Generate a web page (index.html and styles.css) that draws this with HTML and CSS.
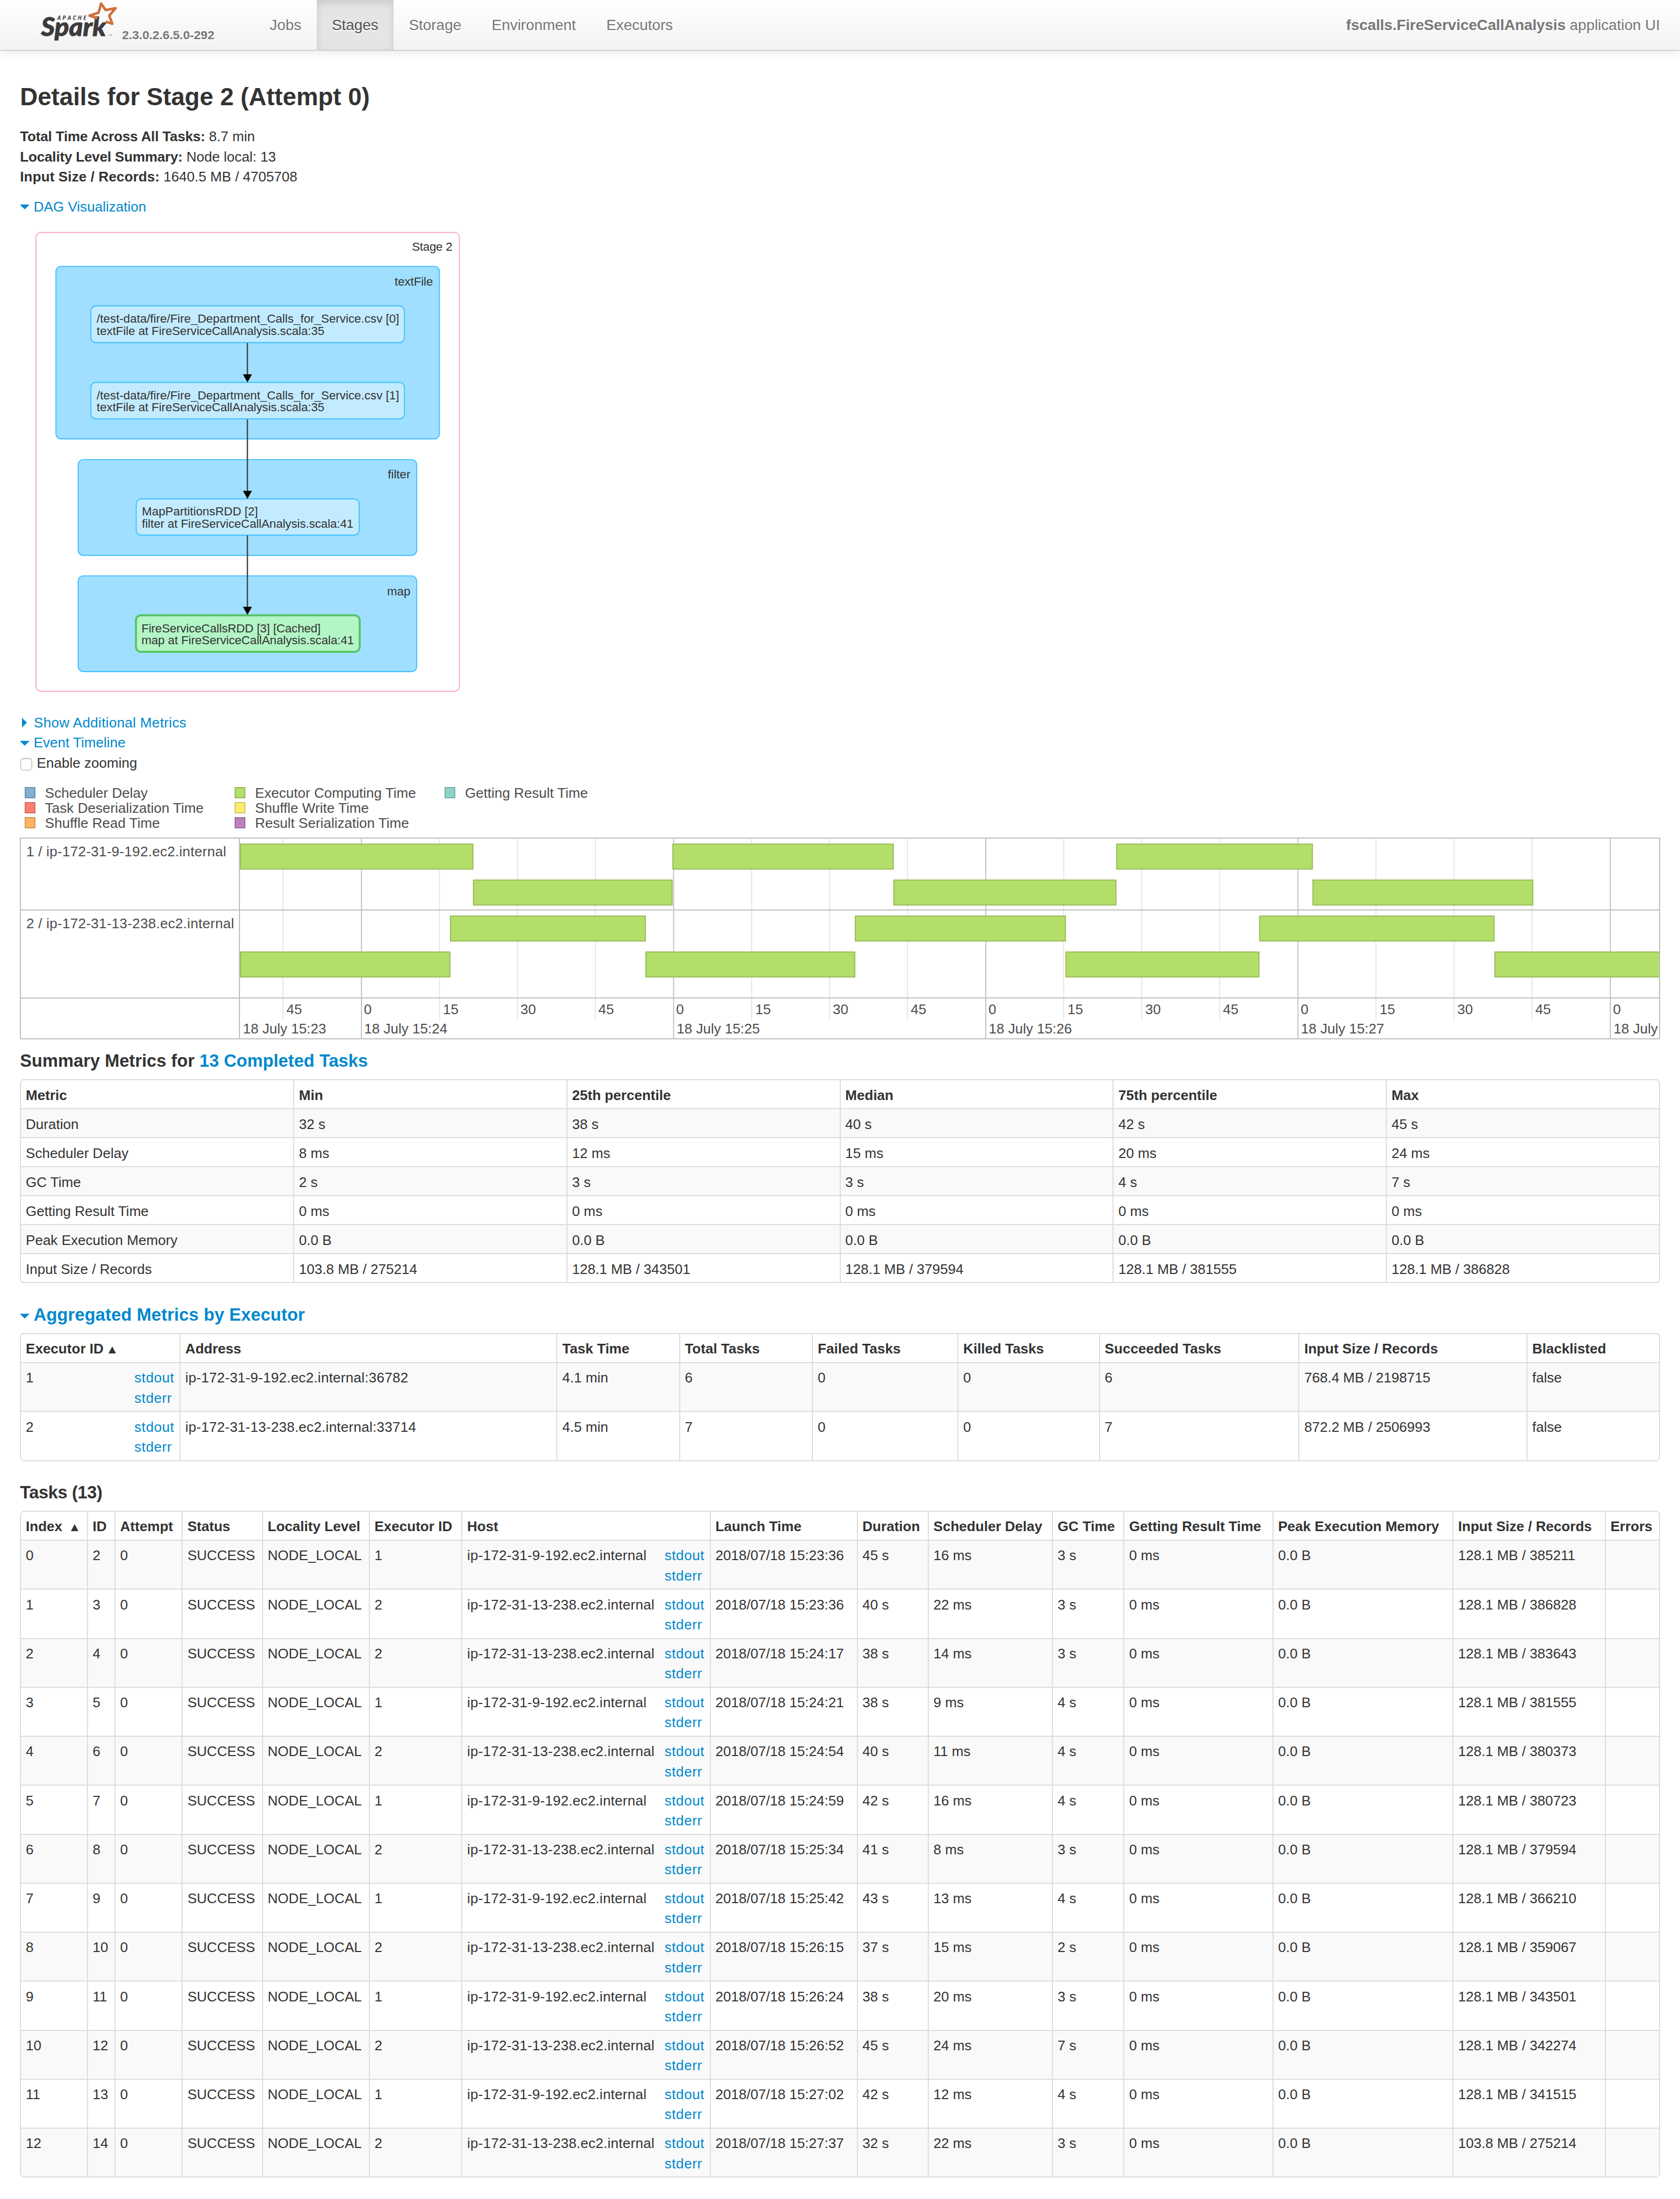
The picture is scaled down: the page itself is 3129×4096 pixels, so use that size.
FILE: index.html
```html
<!DOCTYPE html>
<html lang="en">
<head>
<meta charset="utf-8">
<title>fscalls.FireServiceCallAnalysis - Details for Stage 2 (Attempt 0)</title>
<link rel="stylesheet" href="styles.css">
</head>
<body>
<header class="navbar">
  <a class="brand">
    <svg class="logo" viewBox="60 0 400 110" role="img" aria-label="Apache Spark">
      <text class="logo-word" x="82" y="71.5" textLength="130" lengthAdjust="spacingAndGlyphs">Spark</text>
      <text class="logo-apache" x="114.5" y="39.7" textLength="58">APACHE</text>
      <text class="logo-tm" x="216" y="74">™</text>
      <path class="logo-star" d="M211 43.5 L224.5 47.5 L218.3 31.5 L231 16.3 L211 20 L202 7 L197 25.5 L179 31.2 L195 36.8"/>
    </svg>
    <span class="version">2.3.0.2.6.5.0-292</span>
  </a>
  <nav class="nav">
    <a>Jobs</a><a class="active">Stages</a><a>Storage</a><a>Environment</a><a>Executors</a>
  </nav>
  <p class="app-name"><strong>fscalls.FireServiceCallAnalysis</strong> application UI</p>
</header>

<main class="container">
  <h3 class="page-title">Details for Stage 2 (Attempt 0)</h3>
  <ul class="facts">
    <li><strong class="tight">Total Time Across All Tasks:</strong> 8.7 min</li>
    <li><strong class="tight">Locality Level Summary:</strong> Node local: 13</li>
    <li><strong class="loose">Input Size / Records:</strong> 1640.5 MB / 4705708</li>
  </ul>
  <div class="toggle dag-toggle"><span class="arrow open"></span><a>DAG Visualization</a></div>

  <svg class="dag" viewBox="71 463 850 922">
    <rect class="stage" x="72" y="465" width="847" height="918" rx="10"/>
    <g class="cluster">
      <rect x="112" y="533" width="767" height="345" rx="10"/>
      <rect x="156.5" y="919.5" width="677" height="191.5" rx="10"/>
      <rect x="156.5" y="1152" width="677" height="191.5" rx="10"/>
    </g>
    <g class="node">
      <rect x="182" y="612" width="627" height="73.5" rx="10"/>
      <rect x="182" y="765" width="627" height="73" rx="10"/>
      <rect x="272.5" y="998" width="446" height="72.5" rx="10"/>
      <rect class="cached" x="272" y="1231" width="447.5" height="73" rx="10"/>
    </g>
    <path class="edge" d="M495 686V752M495 839V985M495 1071V1218"/>
    <path class="head" d="M486 749h18l-9 16zM486 982h18l-9 16zM486 1214h18l-9 16z"/>
    <g class="cluster-label">
      <text x="905" y="501.8" textLength="81">Stage 2</text>
      <text x="866" y="571" textLength="76.5">textFile</text>
      <text x="821" y="957.4">filter</text>
      <text x="821" y="1190.6">map</text>
    </g>
    <g class="node-label">
      <text x="193.5" y="645.7" textLength="605">/test-data/fire/Fire_Department_Calls_for_Service.csv [0]</text>
      <text x="193.5" y="670" textLength="455.5">textFile at FireServiceCallAnalysis.scala:35</text>
      <text x="193.5" y="798.8" textLength="605">/test-data/fire/Fire_Department_Calls_for_Service.csv [1]</text>
      <text x="193.5" y="822.8" textLength="455.5">textFile at FireServiceCallAnalysis.scala:35</text>
      <text x="284" y="1031.5" textLength="232">MapPartitionsRDD [2]</text>
      <text x="284" y="1056" textLength="423">filter at FireServiceCallAnalysis.scala:41</text>
      <text x="283" y="1264.7" textLength="358.5">FireServiceCallsRDD [3] [Cached]</text>
      <text x="283" y="1289" textLength="425">map at FireServiceCallAnalysis.scala:41</text>
    </g>
  </svg>

  <div class="toggle metrics-toggle"><span class="arrow closed"></span><a>Show Additional Metrics</a></div>
  <div class="toggle"><span class="arrow open"></span><a>Event Timeline</a></div>
  <label class="zooming"><span class="checkbox"></span>Enable zooming</label>

  <ul class="legend">
    <li><i class="scheduler"></i>Scheduler Delay</li>
    <li><i class="deserialize"></i>Task Deserialization Time</li>
    <li><i class="read"></i>Shuffle Read Time</li>
    <li><i class="compute"></i>Executor Computing Time</li>
    <li><i class="write"></i>Shuffle Write Time</li>
    <li><i class="serialize"></i>Result Serialization Time</li>
    <li><i class="result"></i>Getting Result Time</li>
  </ul>

  <section class="timeline">
    <div class="groups">
      <div class="group">1 / ip-172-31-9-192.ec2.internal</div>
      <div class="group second">2 / ip-172-31-13-238.ec2.internal</div>
    </div>
    <svg class="plot" viewBox="480 1677 2839 400" preserveAspectRatio="none">
      <path class="minor" d="M566 1677V2040M879 1677V2040M1035 1677V2040M1191 1677V2040M1503.5 1677V2040M1659.5 1677V2040M1815.5 1677V2040M2128 1677V2040M2284 1677V2040M2440 1677V2040M2752.500 1677V2040M2909 1677V2040M3065 1677V2040"/>
      <path class="major" d="M723 1677V2077M1347.5 1677V2077M1972 1677V2077M2596.500 1677V2077M3221.500 1677V2077"/>
      <path class="rule" d="M480 1820H3319M480 1996H3319"/>
      <g class="task">
        <rect x="481" y="1688" width="465" height="50"/>
        <rect x="1346" y="1688" width="441" height="50"/>
        <rect x="2234" y="1688" width="391.500" height="50"/>
        <rect x="947" y="1760" width="397.500" height="50"/>
        <rect x="1788" y="1760" width="444.500" height="50"/>
        <rect x="2626.500" y="1760" width="440" height="50"/>
        <rect x="901" y="1832" width="390" height="50"/>
        <rect x="1711" y="1832" width="420.500" height="50"/>
        <rect x="2520" y="1832" width="469" height="50"/>
        <rect x="481" y="1904" width="419" height="50"/>
        <rect x="1292" y="1904" width="418" height="50"/>
        <rect x="2132.500" y="1904" width="386" height="50"/>
        <rect x="2990.500" y="1904" width="340" height="50"/>
      </g>
      <g class="axis">
        <text x="573" y="2028">45</text><text x="728" y="2028">0</text><text x="886" y="2028">15</text><text x="1041" y="2028">30</text><text x="1197" y="2028">45</text>
        <text x="1352.500" y="2028">0</text><text x="1511" y="2028">15</text><text x="1666" y="2028">30</text><text x="1822" y="2028">45</text>
        <text x="1977.500" y="2028">0</text><text x="2135.500" y="2028">15</text><text x="2291" y="2028">30</text><text x="2446.500" y="2028">45</text>
        <text x="2602" y="2028">0</text><text x="2760" y="2028">15</text><text x="2915.500" y="2028">30</text><text x="3071.500" y="2028">45</text>
        <text x="3227" y="2028">0</text>
        <text x="486" y="2067.500">18 July 15:23</text><text x="728.500" y="2067.500">18 July 15:24</text><text x="1353.500" y="2067.500">18 July 15:25</text><text x="1978" y="2067.500">18 July 15:26</text><text x="2602.500" y="2067.500">18 July 15:27</text><text x="3228" y="2067.500">18 July</text>
      </g>
    </svg>
  </section>

  <h4 class="summary-title">Summary Metrics for <a>13 Completed Tasks</a></h4>
  <table class="table summary">
    <thead><tr><th>Metric</th><th>Min</th><th>25th percentile</th><th>Median</th><th>75th percentile</th><th>Max</th></tr></thead>
    <tbody>
      <tr><td>Duration</td><td>32 s</td><td>38 s</td><td>40 s</td><td>42 s</td><td>45 s</td></tr>
      <tr><td>Scheduler Delay</td><td>8 ms</td><td>12 ms</td><td>15 ms</td><td>20 ms</td><td>24 ms</td></tr>
      <tr><td>GC Time</td><td>2 s</td><td>3 s</td><td>3 s</td><td>4 s</td><td>7 s</td></tr>
      <tr><td>Getting Result Time</td><td>0 ms</td><td>0 ms</td><td>0 ms</td><td>0 ms</td><td>0 ms</td></tr>
      <tr><td>Peak Execution Memory</td><td>0.0 B</td><td>0.0 B</td><td>0.0 B</td><td>0.0 B</td><td>0.0 B</td></tr>
      <tr><td>Input Size / Records</td><td>103.8 MB / 275214</td><td>128.1 MB / 343501</td><td>128.1 MB / 379594</td><td>128.1 MB / 381555</td><td>128.1 MB / 386828</td></tr>
    </tbody>
  </table>

  <h4 class="executors-title"><span class="arrow open"></span><a>Aggregated Metrics by Executor</a></h4>
  <table class="table executors">
    <colgroup><col class="e1"><col class="e2"><col class="e3"><col class="e4"><col class="e5"><col class="e6"><col class="e7"><col class="e8"><col></colgroup>
    <thead><tr><th>Executor ID<span class="sort"></span></th><th>Address</th><th>Task Time</th><th>Total Tasks</th><th>Failed Tasks</th><th>Killed Tasks</th><th>Succeeded Tasks</th><th>Input Size / Records</th><th>Blacklisted</th></tr></thead>
    <tbody>
      <tr><td><div class="logs"><span>1</span><span><a>stdout</a><a>stderr</a></span></div></td><td class="host">ip-172-31-9-192.ec2.internal:36782</td><td>4.1 min</td><td>6</td><td>0</td><td>0</td><td>6</td><td>768.4 MB / 2198715</td><td>false</td></tr>
      <tr><td><div class="logs"><span>2</span><span><a>stdout</a><a>stderr</a></span></div></td><td class="host">ip-172-31-13-238.ec2.internal:33714</td><td>4.5 min</td><td>7</td><td>0</td><td>0</td><td>7</td><td>872.2 MB / 2506993</td><td>false</td></tr>
    </tbody>
  </table>

  <h4 class="tasks-title">Tasks (13)</h4>
  <table class="table tasks">
    <colgroup><col class="t1"><col class="t2"><col class="t3"><col class="t4"><col class="t5"><col class="t6"><col class="t7"><col class="t8"><col class="t9"><col class="t10"><col class="t11"><col class="t12"><col class="t13"><col class="t14"><col></colgroup>
    <thead><tr><th>Index<span class="sort wide"></span></th><th>ID</th><th>Attempt</th><th>Status</th><th>Locality Level</th><th>Executor ID</th><th>Host</th><th>Launch Time</th><th>Duration</th><th>Scheduler Delay</th><th>GC Time</th><th>Getting Result Time</th><th>Peak Execution Memory</th><th>Input Size / Records</th><th>Errors</th></tr></thead>
    <tbody>
      <tr><td>0</td><td>2</td><td>0</td><td>SUCCESS</td><td>NODE_LOCAL</td><td>1</td><td><div class="logs"><span class="host">ip-172-31-9-192.ec2.internal</span><span><a>stdout</a><a>stderr</a></span></div></td><td>2018/07/18 15:23:36</td><td>45 s</td><td>16 ms</td><td>3 s</td><td>0 ms</td><td>0.0 B</td><td>128.1 MB / 385211</td><td></td></tr>
      <tr><td>1</td><td>3</td><td>0</td><td>SUCCESS</td><td>NODE_LOCAL</td><td>2</td><td><div class="logs"><span class="host">ip-172-31-13-238.ec2.internal</span><span><a>stdout</a><a>stderr</a></span></div></td><td>2018/07/18 15:23:36</td><td>40 s</td><td>22 ms</td><td>3 s</td><td>0 ms</td><td>0.0 B</td><td>128.1 MB / 386828</td><td></td></tr>
      <tr><td>2</td><td>4</td><td>0</td><td>SUCCESS</td><td>NODE_LOCAL</td><td>2</td><td><div class="logs"><span class="host">ip-172-31-13-238.ec2.internal</span><span><a>stdout</a><a>stderr</a></span></div></td><td>2018/07/18 15:24:17</td><td>38 s</td><td>14 ms</td><td>3 s</td><td>0 ms</td><td>0.0 B</td><td>128.1 MB / 383643</td><td></td></tr>
      <tr><td>3</td><td>5</td><td>0</td><td>SUCCESS</td><td>NODE_LOCAL</td><td>1</td><td><div class="logs"><span class="host">ip-172-31-9-192.ec2.internal</span><span><a>stdout</a><a>stderr</a></span></div></td><td>2018/07/18 15:24:21</td><td>38 s</td><td>9 ms</td><td>4 s</td><td>0 ms</td><td>0.0 B</td><td>128.1 MB / 381555</td><td></td></tr>
      <tr><td>4</td><td>6</td><td>0</td><td>SUCCESS</td><td>NODE_LOCAL</td><td>2</td><td><div class="logs"><span class="host">ip-172-31-13-238.ec2.internal</span><span><a>stdout</a><a>stderr</a></span></div></td><td>2018/07/18 15:24:54</td><td>40 s</td><td>11 ms</td><td>4 s</td><td>0 ms</td><td>0.0 B</td><td>128.1 MB / 380373</td><td></td></tr>
      <tr><td>5</td><td>7</td><td>0</td><td>SUCCESS</td><td>NODE_LOCAL</td><td>1</td><td><div class="logs"><span class="host">ip-172-31-9-192.ec2.internal</span><span><a>stdout</a><a>stderr</a></span></div></td><td>2018/07/18 15:24:59</td><td>42 s</td><td>16 ms</td><td>4 s</td><td>0 ms</td><td>0.0 B</td><td>128.1 MB / 380723</td><td></td></tr>
      <tr><td>6</td><td>8</td><td>0</td><td>SUCCESS</td><td>NODE_LOCAL</td><td>2</td><td><div class="logs"><span class="host">ip-172-31-13-238.ec2.internal</span><span><a>stdout</a><a>stderr</a></span></div></td><td>2018/07/18 15:25:34</td><td>41 s</td><td>8 ms</td><td>3 s</td><td>0 ms</td><td>0.0 B</td><td>128.1 MB / 379594</td><td></td></tr>
      <tr><td>7</td><td>9</td><td>0</td><td>SUCCESS</td><td>NODE_LOCAL</td><td>1</td><td><div class="logs"><span class="host">ip-172-31-9-192.ec2.internal</span><span><a>stdout</a><a>stderr</a></span></div></td><td>2018/07/18 15:25:42</td><td>43 s</td><td>13 ms</td><td>4 s</td><td>0 ms</td><td>0.0 B</td><td>128.1 MB / 366210</td><td></td></tr>
      <tr><td>8</td><td>10</td><td>0</td><td>SUCCESS</td><td>NODE_LOCAL</td><td>2</td><td><div class="logs"><span class="host">ip-172-31-13-238.ec2.internal</span><span><a>stdout</a><a>stderr</a></span></div></td><td>2018/07/18 15:26:15</td><td>37 s</td><td>15 ms</td><td>2 s</td><td>0 ms</td><td>0.0 B</td><td>128.1 MB / 359067</td><td></td></tr>
      <tr><td>9</td><td>11</td><td>0</td><td>SUCCESS</td><td>NODE_LOCAL</td><td>1</td><td><div class="logs"><span class="host">ip-172-31-9-192.ec2.internal</span><span><a>stdout</a><a>stderr</a></span></div></td><td>2018/07/18 15:26:24</td><td>38 s</td><td>20 ms</td><td>3 s</td><td>0 ms</td><td>0.0 B</td><td>128.1 MB / 343501</td><td></td></tr>
      <tr><td>10</td><td>12</td><td>0</td><td>SUCCESS</td><td>NODE_LOCAL</td><td>2</td><td><div class="logs"><span class="host">ip-172-31-13-238.ec2.internal</span><span><a>stdout</a><a>stderr</a></span></div></td><td>2018/07/18 15:26:52</td><td>45 s</td><td>24 ms</td><td>7 s</td><td>0 ms</td><td>0.0 B</td><td>128.1 MB / 342274</td><td></td></tr>
      <tr><td>11</td><td>13</td><td>0</td><td>SUCCESS</td><td>NODE_LOCAL</td><td>1</td><td><div class="logs"><span class="host">ip-172-31-9-192.ec2.internal</span><span><a>stdout</a><a>stderr</a></span></div></td><td>2018/07/18 15:27:02</td><td>42 s</td><td>12 ms</td><td>4 s</td><td>0 ms</td><td>0.0 B</td><td>128.1 MB / 341515</td><td></td></tr>
      <tr><td>12</td><td>14</td><td>0</td><td>SUCCESS</td><td>NODE_LOCAL</td><td>2</td><td><div class="logs"><span class="host">ip-172-31-13-238.ec2.internal</span><span><a>stdout</a><a>stderr</a></span></div></td><td>2018/07/18 15:27:37</td><td>32 s</td><td>22 ms</td><td>3 s</td><td>0 ms</td><td>0.0 B</td><td>103.8 MB / 275214</td><td></td></tr>
    </tbody>
  </table>
</main>
</body>
</html>
```
FILE: styles.css
```css
/* 1rem is ten layout units; every length below scales with it */
html { font-size: 18.625px; }
* { box-sizing: border-box; }
body {
  margin: 0;
  background: #fff;
  color: #333;
  font: 1.4rem/2rem "Helvetica Neue", "Liberation Sans", Arial, sans-serif;
  height: 219.9rem;
  overflow: hidden;
}
h3, h4, p, ul { margin: 0; padding: 0; }
ul { list-style: none; }
a { color: #0088cc; text-decoration: none; }

/* top bar */
.navbar {
  display: flex;
  height: 5.1rem;
  padding: 0 2rem 0 3rem;
  background: linear-gradient(#fff, #f2f2f2);
  border-bottom: 2px solid #d4d4d4;
  box-shadow: 0 .1rem 1rem rgba(0, 0, 0, .1);
  color: #777;
  font-size: 1.5rem;
  text-shadow: 0 .1rem 0 #fff;
}
.brand { display: flex; width: 22.45rem; color: #777; }
.logo { flex: none; width: 20rem; height: 5.5rem; margin-right: -10.8rem; text-shadow: none; }
.logo-word { font: italic 900 50px Lato, "Liberation Sans", sans-serif; fill: #3c3a3e; stroke: #3c3a3e; stroke-width: 1; }
.logo-apache { font: italic 700 11px "Open Sans", sans-serif; fill: #3c3a3e; }
.logo-tm { font: 8px "Liberation Sans", sans-serif; fill: #888; }
.logo-star { fill: none; stroke: #d06f3a; stroke-width: 5; stroke-linejoin: round; }
.version { font-size: 1.22rem; font-weight: bold; margin-top: 2.53rem; }
.nav { display: flex; }
.nav a { padding: 1.5rem 1.52rem 0; color: #777; }
.nav .active {
  color: #555;
  background: #e5e5e5;
  box-shadow: inset 0 .3rem .8rem rgba(0, 0, 0, .125);
}
.app-name { margin-left: auto; padding-top: 1.5rem; font-size: 1.49rem; }

.container { padding: 0 2rem; }
.page-title { margin-top: 2.62rem; font-size: 2.45rem; line-height: 4rem; }
.facts { margin-top: .97rem; }
.tight { letter-spacing: -.01rem; }
.loose { letter-spacing: .006rem; }

/* collapsible section links */
.arrow { display: inline-block; width: 0; height: 0; border: 0 solid transparent; }
.arrow.open { border-width: .5rem .5rem 0; border-top-color: #0088cc; margin-right: .4rem; vertical-align: .18rem; }
.arrow.closed { border-width: .5rem 0 .5rem .5rem; border-left-color: #0088cc; margin: 0 .7rem 0 .2rem; vertical-align: -.03rem; }
.toggle { height: 2rem; }
.dag-toggle { margin-top: 1rem; }
.metrics-toggle a { letter-spacing: .018rem; }

/* DAG */
.dag { display: block; width: 42.5rem; height: 46.1rem; margin: 1.46rem 0 0 1.55rem; }
.dag .stage { fill: #fff; stroke: #ffa6b6; stroke-width: 2; }
.dag .cluster rect { fill: #a0dfff; stroke: #3ec0ff; stroke-width: 2; }
.dag .node rect { fill: #c3ebff; stroke: #3ec0ff; stroke-width: 2; }
.dag .node .cached { fill: #b3f5c5; stroke: #56c466; stroke-width: 4; }
.dag .edge { fill: none; stroke: #444; stroke-width: 2.6; }
.dag text { font-size: 24px; fill: #333; }
.cluster-label { text-anchor: end; }

.metrics-toggle { margin-top: 2.05rem; }
.zooming { display: flex; height: 2rem; line-height: 2.06rem; }
.checkbox {
  width: 1.2rem;
  height: 1.2rem;
  margin: .54rem .45rem 0 .03rem;
  border: 1px solid #aaa;
  border-radius: .3rem;
  background: #fff;
  box-shadow: inset 0 1px 2px rgba(0, 0, 0, .2);
}

/* timeline */
.legend {
  display: grid;
  grid-template-rows: repeat(3, 1.5rem);
  grid-auto-flow: column;
  grid-auto-columns: 21rem;
  justify-content: start;
  margin-top: 1.3rem;
  padding-left: .45rem;
  line-height: 1.5rem;
  color: #4d4d4d;
}
.legend li { display: flex; }
.legend i { width: 1.1rem; height: 1.1rem; margin: .14rem .95rem 0 0; border: 2px solid; }
.scheduler { background: #80b1d3; border-color: #6b94b0 !important; }
.deserialize { background: #fb8072; border-color: #d26b5f !important; }
.read { background: #fdb462; border-color: #d39651 !important; }
.compute { background: #b3de69; border-color: #95b957 !important; }
.write { background: #ffed6f; border-color: #d5c65c !important; }
.serialize { background: #bc80bd; border-color: #9d6b9e !important; }
.result { background: #8dd3c7; border-color: #75b0a6 !important; }
.timeline {
  display: flex;
  height: 20.2rem;
  margin-top: .65rem;
  border: 2px solid #bfbfbf;
  color: #4d4d4d;
}
.groups { flex: none; width: 21.88rem; border-right: 2px solid #bfbfbf; }
.group { height: 7.2rem; padding: .33rem 0 0 .52rem; border-bottom: 2px solid #bfbfbf; white-space: nowrap; letter-spacing: .015rem; }
.group.second { height: 8.8rem; }
.plot { flex: 1; width: 0; height: 100%; overflow: hidden; }
.minor { stroke: #e5e5e5; stroke-width: 2; }
.major { stroke: #bfbfbf; stroke-width: 2; }
.rule { stroke: #bfbfbf; stroke-width: 2.2; }
.task rect { fill: #b3de69; stroke: #95b957; stroke-width: 2; }
.axis { font-size: 28px; fill: #4d4d4d; }

/* tables */
h4 { font-size: 1.75rem; line-height: 2rem; letter-spacing: .003rem; }
.summary-title { margin-top: 1.12rem; }
.executors-title { margin-top: 2.11rem; }
.executors-title a { letter-spacing: .01rem; }
.tasks-title { margin-top: 2.1rem; letter-spacing: -.02rem; }
.table {
  width: 100%;
  margin-top: .87rem;
  table-layout: fixed;
  border-collapse: separate;
  border-spacing: 0;
  border: 2px solid #ddd;
  border-left: 0;
  border-radius: .4rem;
}
.table th, .table td {
  padding: .5rem .4rem calc(.4rem - 2px) .47rem;
  border-left: 2px solid #ddd;
  text-align: left;
  vertical-align: top;
  white-space: nowrap;
}
.table td { border-top: 2px solid #ddd; }
.table th:first-child { border-top-left-radius: .4rem; }
.table tr:last-child td:first-child { border-bottom-left-radius: .4rem; }
.table tbody tr:nth-child(odd) td { background: #f9f9f9; }
.host { letter-spacing: .013rem; }
.logs { display: flex; justify-content: space-between; padding-right: .12rem; }
.logs a { display: block; letter-spacing: .03rem; }
.sort {
  display: inline-block;
  margin-left: .5rem;
  border: solid transparent;
  border-width: 0 .38rem .75rem;
  border-bottom-color: #333;
}
.sort.wide { margin-left: .85rem; }

.e1 { width: 15.95rem; } .e2 { width: 37.7rem; } .e3 { width: 12.25rem; }
.e4 { width: 13.3rem; } .e5 { width: 14.55rem; } .e6 { width: 14.15rem; }
.e7 { width: 19.95rem; } .e8 { width: 22.8rem; }

.t1 { width: 6.68rem; } .t2 { width: 2.76rem; } .t3 { width: 6.73rem; }
.t4 { width: 8.02rem; } .t5 { width: 10.68rem; } .t6 { width: 9.27rem; }
.t7 { width: 24.83rem; } .t8 { width: 14.7rem; } .t9 { width: 7.1rem; }
.t10 { width: 12.42rem; } .t11 { width: 7.15rem; } .t12 { width: 14.9rem; }
.t13 { width: 18rem; } .t14 { width: 15.23rem; }
```
